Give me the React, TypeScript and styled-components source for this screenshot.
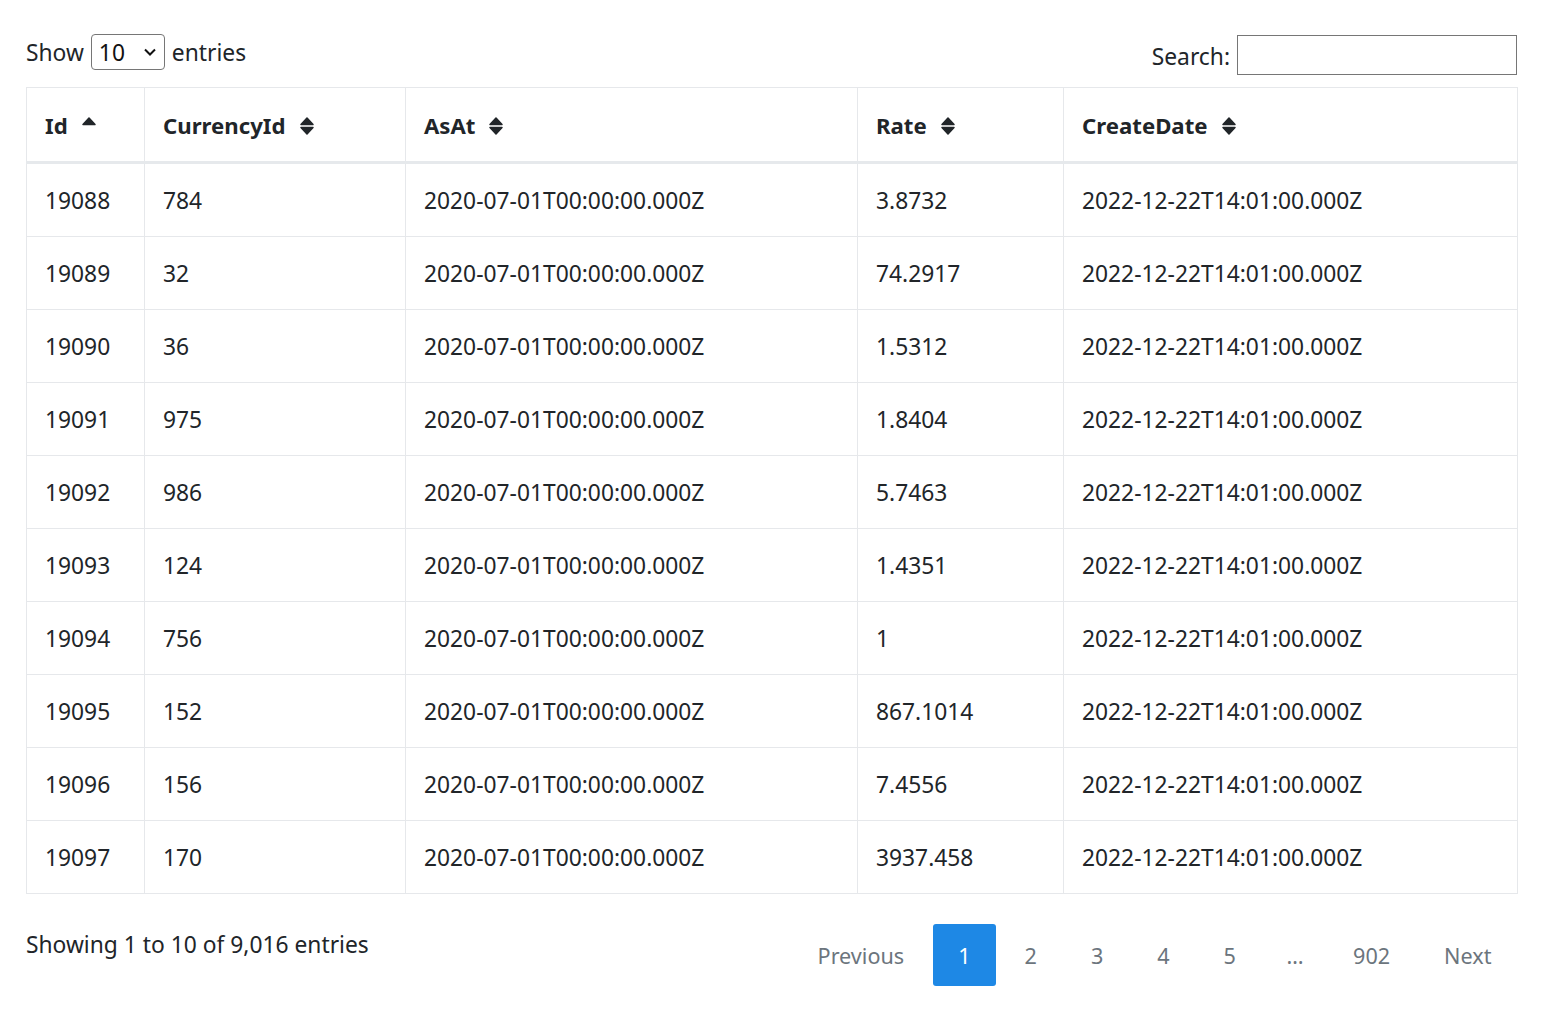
import React from "react";
import styled, { createGlobalStyle } from "styled-components";

const GlobalStyle = createGlobalStyle`
  html, body { margin: 0; padding: 0; background: #fff; }
  body {
    font-family: "Noto Sans", "Open Sans", "DejaVu Sans", sans-serif;
    color: #212529;
    font-size: 22.8px;
  }
`;

const Page = styled.div`
  padding: 34px 26px 0 26px;
`;

const TopBar = styled.div`
  display: flex;
  justify-content: space-between;
  align-items: flex-start;
  height: 53px;
`;

const LengthLabel = styled.label`
  display: flex;
  align-items: center;
  gap: 7px;
  height: 36px;
  font-size: 22.8px;
`;

const SelectBox = styled.div`
  position: relative;
  width: 74px;
  height: 36px;
  box-sizing: border-box;
  border: 1px solid #767676;
  border-radius: 4px;
  display: flex;
  align-items: center;
  padding-left: 7px;
  font-size: 22.8px;
  color: #111;
`;

const Chevron = styled.svg`
  position: absolute;
  right: 7px;
  top: 12px;
`;

const SearchLabel = styled.label`
  display: flex;
  align-items: center;
  gap: 7px;
  height: 40px;
  font-size: 22.8px;
  padding-top: 2px;
`;

const SearchInput = styled.div`
  width: 280px;
  height: 40px;
  box-sizing: border-box;
  border: 1px solid #767676;
  margin-top: -2px;
`;

const Table = styled.table`
  width: 1491px;
  border-collapse: collapse;
  table-layout: fixed;
  font-size: 22.8px;
`;

const Th = styled.th<{ $w: number }>`
  box-sizing: border-box;
  width: ${(p) => p.$w}px;
  text-align: left;
  font-weight: 700;
  font-size: 22.2px;
  padding: 23px 18px 20px 18px;
  line-height: 30px;
  border: 1px solid #e6e8eb;
  border-bottom: 3px solid #e6e9ec;
  white-space: nowrap;
`;

const HeadInner = styled.span`
  display: inline-flex;
  align-items: center;
  gap: 13px;
`;

const Td = styled.td`
  padding: 22px 18px 20px 18px;
  line-height: 30px;
  border: 1px solid #e6e8eb;
  white-space: nowrap;
`;

const Footer = styled.div`
  display: flex;
  justify-content: space-between;
  align-items: flex-start;
  padding-top: 30px;
`;

const Info = styled.div`
  font-size: 22.8px;
  line-height: 44px;
  margin-top: -1px;
`;

const Pager = styled.div`
  display: flex;
  gap: 3px;
`;

const PageBtn = styled.div<{ $active?: boolean; $ellipsis?: boolean }>`
  height: 62px;
  padding: 0 ${(p) => (p.$ellipsis ? "22px" : "25.5px")};
  display: flex;
  align-items: center;
  justify-content: center;
  font-size: 21.6px;
  border-radius: 3px;
  letter-spacing: ${(p) => (p.$ellipsis ? "-1px" : "0")};
  color: ${(p) => (p.$active ? "#fff" : "#6c757d")};
  background: ${(p) => (p.$active ? "#1e88e5" : "transparent")};
`;

const SortIcon = ({ up }: { up?: boolean }) => (
  <svg width="16" height="20" viewBox="0 0 16 20">
    <path d="M2 8.5 L8 2 L14 8.5 Z" fill="#212529" stroke="#212529" strokeWidth="1.5" strokeLinejoin="round" />
    {!up && (
      <path d="M2 11.5 L8 18 L14 11.5 Z" fill="#212529" stroke="#212529" strokeWidth="1.5" strokeLinejoin="round" />
    )}
  </svg>
);

const rows: [string, string, string][] = [
  ["19088", "784", "3.8732"],
  ["19089", "32", "74.2917"],
  ["19090", "36", "1.5312"],
  ["19091", "975", "1.8404"],
  ["19092", "986", "5.7463"],
  ["19093", "124", "1.4351"],
  ["19094", "756", "1"],
  ["19095", "152", "867.1014"],
  ["19096", "156", "7.4556"],
  ["19097", "170", "3937.458"],
];

const cols: { name: string; w: number; up?: boolean }[] = [
  { name: "Id", w: 118, up: true },
  { name: "CurrencyId", w: 261 },
  { name: "AsAt", w: 452 },
  { name: "Rate", w: 206 },
  { name: "CreateDate", w: 454 },
];

export default function App() {
  return (
    <Page>
      <GlobalStyle />
      <TopBar>
        <LengthLabel>
          Show
          <SelectBox>
            10
            <Chevron width="14" height="10" viewBox="0 0 14 10">
              <path d="M2 2.5 L7 7.5 L12 2.5" fill="none" stroke="#111" strokeWidth="2" />
            </Chevron>
          </SelectBox>
          entries
        </LengthLabel>
        <SearchLabel>
          Search:
          <SearchInput />
        </SearchLabel>
      </TopBar>
      <Table>
        <thead>
          <tr>
            {cols.map((c) => (
              <Th key={c.name} $w={c.w}>
                <HeadInner>
                  {c.name}
                  <SortIcon up={c.up} />
                </HeadInner>
              </Th>
            ))}
          </tr>
        </thead>
        <tbody>
          {rows.map((r) => (
            <tr key={r[0]}>
              <Td>{r[0]}</Td>
              <Td>{r[1]}</Td>
              <Td>2020-07-01T00:00:00.000Z</Td>
              <Td>{r[2]}</Td>
              <Td>2022-12-22T14:01:00.000Z</Td>
            </tr>
          ))}
        </tbody>
      </Table>
      <Footer>
        <Info>Showing 1 to 10 of 9,016 entries</Info>
        <Pager>
          <PageBtn>Previous</PageBtn>
          <PageBtn $active>1</PageBtn>
          <PageBtn>2</PageBtn>
          <PageBtn>3</PageBtn>
          <PageBtn>4</PageBtn>
          <PageBtn>5</PageBtn>
          <PageBtn $ellipsis>…</PageBtn>
          <PageBtn>902</PageBtn>
          <PageBtn>Next</PageBtn>
        </Pager>
      </Footer>
    </Page>
  );
}
